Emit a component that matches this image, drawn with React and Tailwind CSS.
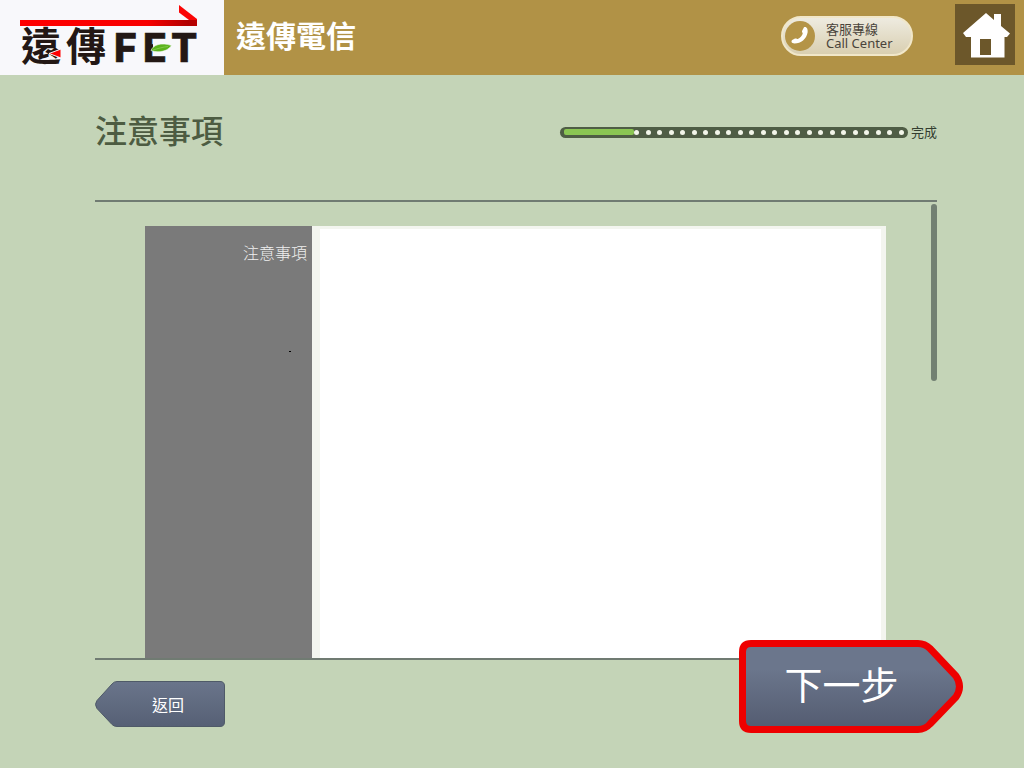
import React from "react";

const DOTS = Array.from({ length: 24 }, (_, i) => i);

function Logo() {
  return (
    <svg viewBox="0 0 224 75" className="block h-[75px] w-[224px]" role="img" aria-label="遠傳 FET">
      <defs>
        <linearGradient id="bar" x1="0" x2="1" y1="0" y2="0">
          <stop offset="0" stopColor="#ff0000" />
          <stop offset="0.72" stopColor="#f80000" />
          <stop offset="0.95" stopColor="#b00000" />
          <stop offset="1" stopColor="#b80000" />
        </linearGradient>
      </defs>
      <path d="M20 20H197V26H20Z" fill="url(#bar)" />
      <path d="M179 5L197 19V26L179 12.5Z" fill="#fa0505" />
      <g
        fill="#231815"
        fontFamily="'Noto Sans CJK TC', sans-serif"
        fontWeight="700"
        fontSize="40"
        textAnchor="middle"
      >
        <text x="41" y="61">遠</text>
        <text x="86" y="61">傳</text>
      </g>
      <path d="M49 53.500L61 49V58Z" fill="#ff0000" stroke="#f8f8fb" strokeWidth="1" />
      <path d="M20 20H197V26H20Z" fill="url(#bar)" />
      <g
        fill="#231815"
        stroke="#231815"
        strokeWidth="0.6"
        fontFamily="Inter, sans-serif"
        fontWeight="800"
        fontSize="39"
      >
        <text x="114" y="62">F</text>
        <text x="143" y="62">E</text>
        <text x="171" y="62">T</text>
      </g>
      <path d="M153 41H170V54H153Z" fill="#f8f8fb" />
      <path
        d="M151 50.5C153 45 161 42 171.500 45.500C168 51 159 53.500 151 50.500Z"
        fill="#5bb31c"
        stroke="#f8f8fb"
        strokeWidth="0.6"
      />
      <path d="M153 50C158 48.500 163 47 168 46.500" fill="none" stroke="#8fd05c" strokeWidth="0.7" />
    </svg>
  );
}

function Header() {
  return (
    <header className="flex h-[75px] shrink-0 bg-[#b19246]">
      <div className="bg-[#f8f8fb]">
        <Logo />
      </div>
      <p className="pt-3 pl-3 text-[30px] leading-[44px] font-bold text-white">遠傳電信</p>
      <button
        type="button"
        className="mt-4 ml-auto flex h-10 w-[132px] items-center rounded-full border-2 border-[#f1e7c9] bg-linear-to-b from-[#eeebe0] to-[#d9cfb1] pl-0.5 text-left text-[#4a443b]"
      >
        <svg viewBox="0 0 30 30" className="size-[30px] shrink-0" aria-hidden="true">
          <circle cx="15" cy="15" r="15" fill="#b49447" />
          <path
            d="M19 6.200C21.500 5.200 23.200 8 22.600 11.500C21.500 18 16 22.500 9.500 22.500C6.500 22.300 5.800 20.300 7.200 19L10 17.600C11.500 17.200 12 18.300 12.800 18.100C15.200 17 17 15 17.700 12.800C17.900 11.800 16.700 11.200 17 10Z"
            fill="#fff"
          />
        </svg>
        <span className="ml-[11px] flex flex-col whitespace-nowrap">
          <span className="text-[13px] leading-[15px]">客服專線</span>
          <span className="font-['Noto_Sans',sans-serif] text-[13px] leading-[15px]">Call Center</span>
        </span>
      </button>
      <button
        type="button"
        aria-label="首頁"
        className="mt-1 mr-[9px] ml-[42px] h-[61px] w-[60px] bg-[#6c572a]"
      >
        <svg viewBox="0 0 60 61" className="block h-[61px] w-[60px]" aria-hidden="true">
          <path
            d="M31 9L39 16V10H46V22L55 29.500L52 33H49.500V53.500H16V33H11L8 29Z M25 35V51H36V35Z"
            fill="#fff"
            fillRule="evenodd"
          />
        </svg>
      </button>
    </header>
  );
}

function Progress() {
  return (
    <div className="flex h-[30px] items-center gap-[3px]">
      <div
        role="progressbar"
        aria-label="進度"
        aria-valuenow={20}
        aria-valuemin={0}
        aria-valuemax={100}
        className="flex h-[11px] w-[348px] items-center rounded-full bg-[#4f5d45] pr-1 pl-1"
      >
        <div className="h-1.5 w-[70px] shrink-0 rounded-xs bg-[#8bc653]" />
        <div className="flex flex-1 items-center justify-between">
          {DOTS.map((i) => (
            <span key={i} className="size-[5px] rounded-full bg-[#f3f6ea]" />
          ))}
        </div>
      </div>
      <span className="text-[13px] leading-5 text-[#333d2f]">完成</span>
    </div>
  );
}

function BackButton() {
  return (
    <button type="button" className="grid h-[46px] w-[130px] place-items-center text-white">
      <svg viewBox="0 0 130 46" className="col-start-1 row-start-1 h-[46px] w-[130px]" aria-hidden="true">
        <defs>
          <linearGradient id="back" x1="0" x2="0" y1="0" y2="1">
            <stop offset="0" stopColor="#6a758b" />
            <stop offset="1" stopColor="#566075" />
          </linearGradient>
        </defs>
        <path
          d="M22 0.500H125Q129.500 0.500 129.500 5V41Q129.500 45.500 125 45.500H22Q19 45.500 17 43.500L2 27.500Q-1 23.500 2 19.500L17 3Q19 0.500 22 0.500Z"
          fill="url(#back)"
          stroke="#4f5a68"
        />
      </svg>
      <span className="col-start-1 row-start-1 pl-4 text-base leading-6">返回</span>
    </button>
  );
}

function NextButton() {
  return (
    <button type="button" className="-mt-[41px] grid h-[94px] w-[225px] place-items-center text-white">
      <svg viewBox="0 0 225 94" className="col-start-1 row-start-1 h-[94px] w-[225px]" aria-hidden="true">
        <defs>
          <linearGradient id="next" x1="0" x2="0" y1="0" y2="1">
            <stop offset="0.3" stopColor="#6b768c" />
            <stop offset="1" stopColor="#535b70" />
          </linearGradient>
        </defs>
        <path
          d="M12 3.500H179Q186 3.500 191 8.500L217 36Q224 46.500 217 57L191 84Q186 89.500 179 89.500H12Q3.500 89.500 3.500 81V12Q3.500 3.500 12 3.500Z"
          fill="url(#next)"
          stroke="#ee0000"
          strokeWidth="7"
        />
      </svg>
      <span className="col-start-1 row-start-1 pr-5 pb-2 text-[38px] leading-[48px]">下一步</span>
    </button>
  );
}

export default function App() {
  return (
    <div className="flex h-screen min-h-[500px] flex-col bg-[#c4d4b7] font-['Noto_Sans_CJK_TC',sans-serif]">
      <Header />
      <main className="flex min-h-0 flex-1 flex-col pr-[87px] pl-[95px]">
        <div className="flex h-[125px] shrink-0 items-start justify-between pt-[30px]">
          <h1 className="text-[32px] leading-[48px] font-medium text-[#4d5c42]">注意事項</h1>
          <div className="pt-3">
            <Progress />
          </div>
        </div>
        <div className="flex min-h-0 flex-1 border-y-2 border-[#707b72]">
          <section className="mt-6 mr-[45px] ml-[50px] flex flex-1">
            <div className="flex w-[167px] flex-col items-end bg-[#7a7a7a] pt-3.5 pr-[5px]">
              <h2 className="text-base leading-6 font-light text-[#f0f0f0]">注意事項</h2>
              <span className="mt-[87px] mr-4 h-px w-0.5 bg-black" />
            </div>
            <div className="flex-1 border-t-3 border-r-5 border-l-8 border-[#f3f5ef] bg-white" />
          </section>
          <div className="mt-0.5 h-[177px] w-1.5 rounded-full bg-[#728072]" />
        </div>
      </main>
      <footer className="flex h-[108px] shrink-0 items-start justify-between pt-[21px] pr-[60px] pl-[95px]">
        <BackButton />
        <NextButton />
      </footer>
    </div>
  );
}
